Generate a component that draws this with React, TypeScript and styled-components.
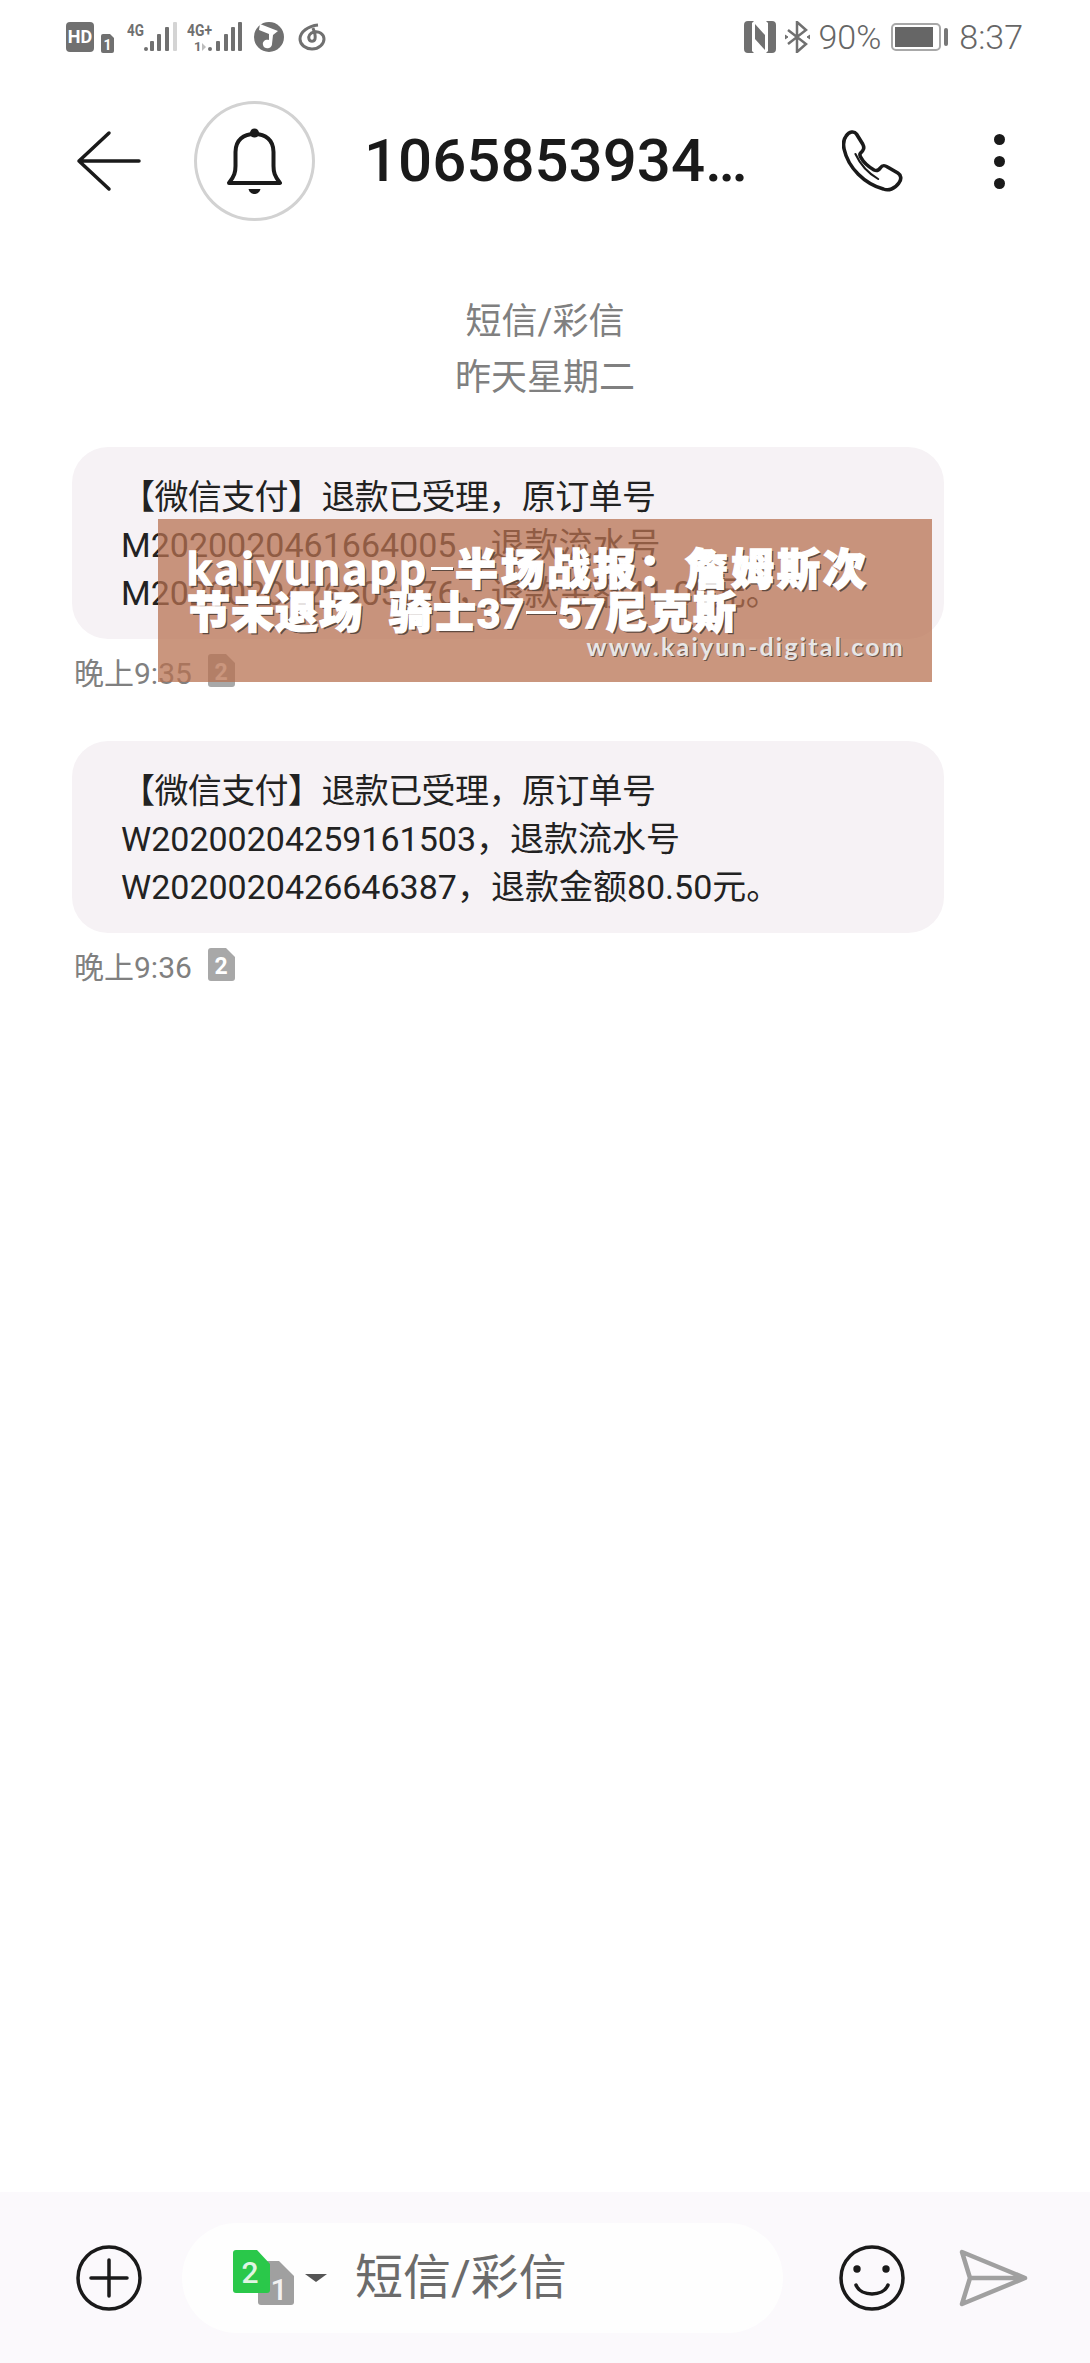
import React from "react";
import styled, { createGlobalStyle } from "styled-components";

const GlobalStyle = createGlobalStyle`
  html, body {
    margin: 0;
    padding: 0;
    background: #fff;
  }
  body {
    font-family: Roboto, "Noto Sans CJK SC", sans-serif;
    color: #222;
  }
`;

const Page = styled.div`
  position: relative;
  width: 1090px;
  height: 2363px;
  display: flex;
  flex-direction: column;
  overflow: hidden;
  background: #fff;
`;

const StatusBar = styled.div`
  height: 74px;
  padding: 0 67px 0 66px;
  display: flex;
  align-items: center;
  justify-content: space-between;
  color: #757575;
`;

const StatusGroup = styled.div`
  display: flex;
  align-items: center;
`;

const StatusIcon = styled.svg<{ $left?: number; $top?: number }>`
  display: block;
  flex: none;
  margin-left: ${(p) => p.$left ?? 0}px;
  margin-top: ${(p) => p.$top ?? 0}px;
`;

const StatusText = styled.span<{ $left: number }>`
  margin-left: ${(p) => p.$left}px;
  font-size: 34px;
  line-height: 40px;
  font-weight: 300;
  color: #666;
`;

const Header = styled.header`
  height: 174px;
  padding-left: 76px;
  display: flex;
  align-items: center;
`;

const IconButton = styled.svg<{ $left?: number }>`
  display: block;
  flex: none;
  margin-left: ${(p) => p.$left ?? 0}px;
`;

const Avatar = styled.div`
  width: 121px;
  height: 120px;
  margin-left: 52px;
  flex: none;
  box-sizing: border-box;
  border: 3px solid #d2d2d2;
  border-radius: 50%;
  display: flex;
  align-items: center;
  justify-content: center;
`;

const Title = styled.h1`
  width: 478px;
  margin: 0 0 0 49px;
  flex: none;
  font-size: 60px;
  line-height: 70px;
  font-weight: 500;
  color: #1a1a1a;
  white-space: nowrap;
`;

const Dots = styled.div`
  margin-left: 91px;
  display: flex;
  flex-direction: column;
  gap: 11px;
`;

const Dot = styled.span`
  width: 11px;
  height: 11px;
  border-radius: 50%;
  background: #1a1a1a;
`;

const DateBlock = styled.div`
  margin-top: 46px;
  text-align: center;
  font-size: 36px;
  line-height: 56px;
  color: #808080;
`;

const Messages = styled.div`
  margin-top: 41px;
  padding-left: 72px;
  display: flex;
  flex-direction: column;
  gap: 54px;
`;

const Message = styled.article`
  display: flex;
  flex-direction: column;
  gap: 15px;
`;

const Bubble = styled.div`
  width: 872px;
  height: 192px;
  box-sizing: border-box;
  padding: 26px 49px 0;
  border-radius: 36px;
  background: #f6f2f5;
  font-size: 34px;
  line-height: 48px;
  color: #222;
  white-space: nowrap;
`;

const LeadLine = styled.div`
  letter-spacing: -0.6px;
`;

const Meta = styled.div`
  padding-left: 2px;
  height: 33px;
  display: flex;
  align-items: center;
  gap: 16px;
  font-size: 30px;
  color: #808080;
`;

const Overlay = styled.div`
  position: absolute;
  left: 158px;
  top: 519px;
  width: 774px;
  height: 163px;
  box-sizing: border-box;
  padding: 26px 27px 0 29px;
  background: rgba(184, 113, 81, 0.74);
  color: #fff;
  font-family: "Noto Sans CJK SC", sans-serif;
  font-weight: 900;
  -webkit-text-stroke: 1.5px #fff;
  text-shadow: 2px 2px 0 #5f4a40;
`;

const OverlayLine = styled.div<{ $spacing: number }>`
  font-size: 43px;
  line-height: 43px;
  letter-spacing: ${(p) => p.$spacing}px;
  white-space: nowrap;
`;

const Latin = styled.span`
  font-family: Lato, sans-serif;
  font-size: 46px;
  line-height: 0;
  letter-spacing: 3.4px;
  font-weight: 700;
`;

const Score = styled.span`
  font-family: Roboto, sans-serif;
  font-size: 41px;
  line-height: 0;
  letter-spacing: 0;
  font-weight: 700;
`;

const ThinDash = styled.span<{ $width: number }>`
  display: inline-block;
  width: ${(p) => p.$width}px;
  height: 3px;
  margin: 0 2px;
  vertical-align: 0.35em;
  background: #fff;
  box-shadow: 1px 1px 0 #5f4a40;
`;

const Teams = styled.span`
  margin-left: 26px;
`;

const Watermark = styled.div`
  text-align: right;
  font-family: Lato, sans-serif;
  font-size: 25px;
  line-height: 30px;
  font-weight: 700;
  letter-spacing: 2.2px;
  color: #e6e6e6;
  -webkit-text-stroke: 0;
  text-shadow: 1px 1px 0 #6a5348;
`;

const Composer = styled.footer`
  margin-top: auto;
  height: 171px;
  box-sizing: border-box;
  padding-left: 76px;
  display: flex;
  align-items: center;
  background: #fbf9fc;
`;

const InputPill = styled.div`
  width: 601px;
  height: 110px;
  margin-left: 40px;
  box-sizing: border-box;
  padding-left: 51px;
  flex: none;
  display: flex;
  align-items: center;
  border-radius: 55px;
  background: #fefefe;
`;

const Caret = styled.span`
  margin-left: 11px;
  width: 0;
  height: 0;
  border-left: 11px solid transparent;
  border-right: 11px solid transparent;
  border-top: 8px solid #555;
`;

const Placeholder = styled.span`
  margin-left: 28px;
  font-size: 48px;
  line-height: 60px;
  color: #6b6b6b;
`;

const SimBadge = () => (
  <svg width={27} height={33} viewBox="0 0 27 33">
    <path d="M3 0 H18 L27 9 V30 a3 3 0 0 1 -3 3 H3 a3 3 0 0 1 -3 -3 V3 a3 3 0 0 1 3 -3 Z" fill="#a8a8a8" />
    <text x="13" y="26" textAnchor="middle" fontFamily="Roboto" fontWeight="700" fontSize="23" fill="#fff">
      2
    </text>
  </svg>
);

const LeftStatusIcons = () => (
  <StatusGroup>
    <StatusIcon width={28} height={30} viewBox="0 0 28 30">
      <rect width="28" height="30" rx="4" fill="#707070" />
      <text x="14" y="21" textAnchor="middle" fontFamily="Roboto" fontWeight="700" fontSize="18" fill="#fff">
        HD
      </text>
    </StatusIcon>
    <StatusIcon $left={7} $top={12} width={13} height={19} viewBox="0 0 13 19">
      <path d="M2 0 H9 L13 4 V17 a2 2 0 0 1 -2 2 H2 a2 2 0 0 1 -2 -2 V2 a2 2 0 0 1 2 -2 Z" fill="#707070" />
      <text x="6.5" y="16" textAnchor="middle" fontFamily="Roboto" fontWeight="700" fontSize="14" fill="#fff">
        1
      </text>
    </StatusIcon>
    <StatusIcon $left={13} width={50} height={32} viewBox="0 0 50 32">
      <text x="0" y="15" fontFamily="Roboto" fontWeight="700" fontSize="16" fill="#707070" textLength="17" lengthAdjust="spacingAndGlyphs">
        4G
      </text>
      <rect x="17" y="26" width="4" height="4" rx="2" fill="#707070" />
      <rect x="23" y="20" width="4" height="10" rx="1" fill="#707070" />
      <rect x="30" y="13" width="4" height="17" rx="1" fill="#707070" />
      <rect x="38" y="6" width="4" height="24" rx="1" fill="#707070" />
      <rect x="46" y="1" width="4" height="29" rx="1" fill="#d4d4d4" />
    </StatusIcon>
    <StatusIcon $left={10} width={55} height={32} viewBox="0 0 55 32">
      <text x="0" y="15" fontFamily="Roboto" fontWeight="700" fontSize="16" fill="#707070" textLength="25" lengthAdjust="spacingAndGlyphs">
        4G+
      </text>
      <text x="7" y="30" fontFamily="Roboto" fontWeight="700" fontSize="13" fill="#707070">
        1
      </text>
      <path d="M15 22 l4 4 l-4 4 Z" fill="#bdbdbd" />
      <rect x="21" y="26" width="4" height="4" rx="2" fill="#707070" />
      <rect x="29" y="20" width="4" height="10" rx="1" fill="#707070" />
      <rect x="37" y="13" width="4" height="17" rx="1" fill="#707070" />
      <rect x="44" y="6" width="4" height="24" rx="1" fill="#707070" />
      <rect x="51" y="1" width="4" height="29" rx="1" fill="#707070" />
    </StatusIcon>
    <StatusIcon $left={12} width={30} height={30} viewBox="0 0 30 30">
      <circle cx="15" cy="15" r="15" fill="#707070" />
      <path d="M6 2 L24 9 L19 13 L18 22 C18 27 10 28 9 23 C8 19 12 17 15 18 L15 12 L5 8 Z" fill="#fff" />
    </StatusIcon>
    <StatusIcon $left={14} width={28} height={28} viewBox="0 0 28 28" fill="none" stroke="#707070" strokeWidth="3">
      <path d="M20 2 C10 3 2 9 2 16 C2 22 8 26 14 26 C21 26 26 21 26 16 C26 11 21 8 16 9 C12 10 10 13 11 16 C12 19 16 19 17 16 C18 12 16 8 15 5" />
    </StatusIcon>
  </StatusGroup>
);

const RightStatusIcons = () => (
  <StatusGroup>
    <StatusIcon width={32} height={32} viewBox="0 0 32 32">
      <path d="M4 0 H10 L8 2 V30 L10 32 H4 a4 4 0 0 1 -4 -4 V4 a4 4 0 0 1 4 -4 Z" fill="#707070" />
      <path d="M28 0 H22 L24 2 V30 L22 32 H28 a4 4 0 0 0 4 -4 V4 a4 4 0 0 0 -4 -4 Z" fill="#707070" />
      <path d="M11 3 L21 14 V29 L11 18 Z" fill="#707070" />
    </StatusIcon>
    <StatusIcon $left={9} width={25} height={32} viewBox="0 0 25 32" fill="none" stroke="#707070" strokeWidth="2.5">
      <path d="M3 9 L21 23 L12 31 V1 L21 9 L3 23" />
      <path d="M0 14 L3 16 L0 18 Z M25 14 L22 16 L25 18 Z" fill="#707070" strokeWidth="1" />
    </StatusIcon>
    <StatusText $left={8}>90%</StatusText>
    <StatusIcon $left={10} width={57} height={28} viewBox="0 0 57 28">
      <rect x="1" y="1" width="48" height="26" rx="4" fill="none" stroke="#a8a8a8" strokeWidth="2" />
      <rect x="4" y="4" width="38" height="20" fill="#666" />
      <rect x="53" y="5" width="4" height="18" rx="2" fill="#777" />
    </StatusIcon>
    <StatusText $left={11}>8:37</StatusText>
  </StatusGroup>
);

const SimPicker = () => (
  <svg width={61} height={55} viewBox="0 0 61 55">
    <path d="M28 11 H46 L61 26 V52 a3 3 0 0 1 -3 3 H28 a3 3 0 0 1 -3 -3 V14 a3 3 0 0 1 3 -3 Z" fill="#a0a0a0" />
    <path d="M3 0 H24 L37 14 V40 a3 3 0 0 1 -3 3 H3 a3 3 0 0 1 -3 -3 V3 a3 3 0 0 1 3 -3 Z" fill="#2ac84a" />
    <text x="17" y="33" textAnchor="middle" fontFamily="Roboto" fontWeight="500" fontSize="30" fill="#dff5e3">
      2
    </text>
    <text x="46" y="50" textAnchor="middle" fontFamily="Roboto" fontWeight="500" fontSize="30" fill="#f2f2f2">
      1
    </text>
  </svg>
);

const messages = [
  {
    lead: "【微信支付】退款已受理，原订单号",
    lines: ["M2020020461664005，退款流水号", "M2020020426605976，退款金额41.00元。"],
    time: "晚上9:35",
  },
  {
    lead: "【微信支付】退款已受理，原订单号",
    lines: ["W20200204259161503，退款流水号", "W2020020426646387，退款金额80.50元。"],
    time: "晚上9:36",
  },
];

const App: React.FC = () => {
  return (
    <Page>
      <GlobalStyle />
      <StatusBar>
        <LeftStatusIcons />
        <RightStatusIcons />
      </StatusBar>

      <Header>
        <IconButton width={66} height={62} viewBox="0 0 66 62" fill="none" stroke="#1a1a1a" strokeWidth="3.5" strokeLinecap="round" strokeLinejoin="round">
          <path d="M33 3 L3 31 L33 59 M3 31 H63" />
        </IconButton>
        <Avatar>
          <svg width={57} height={66} viewBox="0 0 56 66" fill="none">
            <circle cx="28" cy="5" r="4.5" fill="#1a1a1a" />
            <path d="M2.5 55 C8 48 9 44 9 38 V24 C9 12 17 6 28 6 C39 6 47 12 47 24 V38 C47 44 48 48 53.5 55 Z" stroke="#1a1a1a" strokeWidth="4" strokeLinejoin="round" />
            <path d="M22 61 H34 C33 65 30 66 28 66 C26 66 23 65 22 61 Z" fill="#1a1a1a" />
          </svg>
        </Avatar>
        <Title>1065853934…</Title>
        <IconButton width={61} height={62} viewBox="0 0 59 62" preserveAspectRatio="none" fill="none" stroke="#1a1a1a" strokeWidth="3.5" strokeLinejoin="round" strokeLinecap="round">
          <path d="M4 6 C7 1 12 1 14 4 L20 14 C22 18 21 20 18 23 C17 24 17 25 18 27 C21 33 26 37 31 40 C33 41 35 41 37 38 C39 35 41 35 44 37 L54 43 C57 45 58 49 55 53 C51 59 45 61 40 59 C22 54 6 38 2 19 C1 14 1 10 4 6 Z" />
          <path d="M13 24 C17 33 25 43 35 49" strokeWidth="2" />
        </IconButton>
        <Dots>
          <Dot />
          <Dot />
          <Dot />
        </Dots>
      </Header>

      <DateBlock>
        <div>短信/彩信</div>
        <div>昨天星期二</div>
      </DateBlock>

      <Messages>
        {messages.map((m) => (
          <Message key={m.time}>
            <Bubble>
              <LeadLine>{m.lead}</LeadLine>
              {m.lines.map((l) => (
                <div key={l}>{l}</div>
              ))}
            </Bubble>
            <Meta>
              <span>{m.time}</span>
              <SimBadge />
            </Meta>
          </Message>
        ))}
      </Messages>

      <Overlay>
        <OverlayLine $spacing={3}>
          <Latin>kaiyunapp</Latin>
          <ThinDash $width={22} />
          半场战报：詹姆斯次
        </OverlayLine>
        <OverlayLine $spacing={1}>
          节未退场
          <Teams>
            骑士
            <Score>
              37
              <ThinDash $width={30} />
              57
            </Score>
            尼克斯
          </Teams>
        </OverlayLine>
        <Watermark>www.kaiyun-digital.com</Watermark>
      </Overlay>

      <Composer>
        <svg width={66} height={66} viewBox="0 0 66 66" fill="none" stroke="#1a1a1a" strokeWidth="3.5" strokeLinecap="round">
          <circle cx="33" cy="33" r="31" />
          <path d="M15 33 H51 M33 15 V51" />
        </svg>
        <InputPill>
          <SimPicker />
          <Caret />
          <Placeholder>短信/彩信</Placeholder>
        </InputPill>
        <IconButton $left={56} width={66} height={66} viewBox="0 0 66 66" fill="none" stroke="#1a1a1a" strokeWidth="3.5" strokeLinecap="round">
          <circle cx="33" cy="33" r="31" />
          <circle cx="18" cy="24" r="3.7" fill="#1a1a1a" stroke="none" />
          <circle cx="47" cy="24" r="3.7" fill="#1a1a1a" stroke="none" />
          <path d="M17 40 C22 52 44 52 49 40" />
        </IconButton>
        <IconButton $left={53} width={71} height={60} viewBox="0 0 71 60" fill="none" stroke="#a0a0a0" strokeWidth="4.5" strokeLinejoin="round" strokeLinecap="round">
          <path d="M4 4 L12 30 L4 56 L67 30 Z M12 30 H67" />
        </IconButton>
      </Composer>
    </Page>
  );
};

export default App;
